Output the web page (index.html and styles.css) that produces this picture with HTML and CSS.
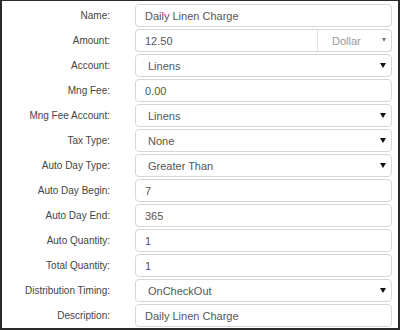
FILE: index.html
```html
<!DOCTYPE html>
<html lang="en">
<head>
  <meta charset="UTF-8" />
  <title>Charge Details</title>
  <link rel="stylesheet" href="styles.css">
</head>
<body>
  <div class="panel">
    <div class="form">
      <label>Name:</label>
      <input class="field" type="text" value="Daily Linen Charge">

      <label>Amount:</label>
      <div class="input-group">
        <input class="field" type="text" value="12.50">
        <div class="select-wrap unit">
          <select class="field"><option>Dollar</option></select>
        </div>
      </div>

      <label>Account:</label>
      <div class="select-wrap">
        <select class="field"><option>Linens</option></select>
      </div>

      <label>Mng Fee:</label>
      <input class="field" type="text" value="0.00">

      <label>Mng Fee Account:</label>
      <div class="select-wrap">
        <select class="field"><option>Linens</option></select>
      </div>

      <label>Tax Type:</label>
      <div class="select-wrap">
        <select class="field"><option>None</option></select>
      </div>

      <label>Auto Day Type:</label>
      <div class="select-wrap">
        <select class="field"><option>Greater Than</option></select>
      </div>

      <label>Auto Day Begin:</label>
      <input class="field" type="text" value="7">

      <label>Auto Day End:</label>
      <input class="field" type="text" value="365">

      <label>Auto Quantity:</label>
      <input class="field" type="text" value="1">

      <label>Total Quantity:</label>
      <input class="field" type="text" value="1">

      <label>Distribution Timing:</label>
      <div class="select-wrap">
        <select class="field"><option>OnCheckOut</option></select>
      </div>

      <label>Description:</label>
      <input class="field" type="text" value="Daily Linen Charge">
    </div>
  </div>
</body>
</html>
```

FILE: styles.css
```css
html, body {
  margin: 0;
  background: #fff;
}
.panel {
  width: 400px;
  height: 330px;
  box-sizing: border-box;
  border: 2px solid #2b2b2b;
  border-top-width: 1px;
  overflow: hidden;
  font-family: 'Liberation Sans', Arial, sans-serif;
}
.form {
  display: grid;
  grid-template-columns: 108px 257px;
  column-gap: 25px;
  row-gap: 2px;
  padding-top: 3px;
}
.form label {
  font-size: 10px;
  color: #444;
  text-align: right;
  align-self: center;
}
.field {
  box-sizing: border-box;
  width: 100%;
  height: 23px;
  margin: 0;
  border: 1px solid #d6d6d6;
  border-radius: 4px;
  background: #fff;
  font-family: 'Liberation Sans', Arial, sans-serif;
  font-size: 11px;
  color: #555;
  padding: 0 9px;
  outline: none;
}
select.field {
  appearance: none;
  -webkit-appearance: none;
  padding-left: 12px;
}
.select-wrap {
  position: relative;
}
.select-wrap::after {
  content: "";
  position: absolute;
  right: 6px;
  top: 9px;
  border-left: 3px solid transparent;
  border-right: 3px solid transparent;
  border-top: 5px solid #111;
  pointer-events: none;
}
.input-group {
  display: flex;
}
.input-group > .field {
  flex: 1;
  border-radius: 4px 0 0 4px;
}
.select-wrap.unit {
  width: 75px;
}
.unit .field {
  border-left: 1px solid #e2e2e2;
  border-radius: 0 4px 4px 0;
  padding-left: 14px;
  color: #999;
}
.input-group > .field {
  border-right: none;
}
.unit::after {
  border-top-color: #777;
  border-left-width: 2.5px;
  border-right-width: 2.5px;
  border-top-width: 4px;
}
```
